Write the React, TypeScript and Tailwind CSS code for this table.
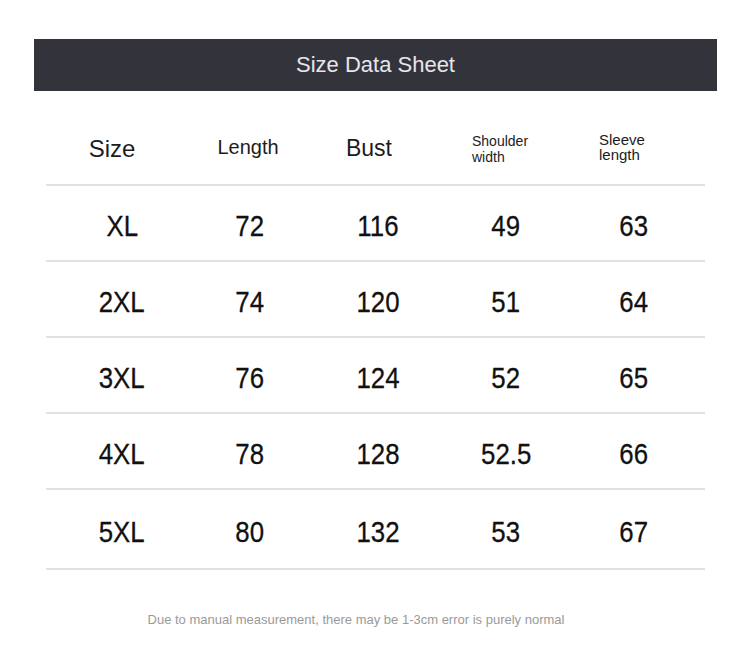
import React from "react";

const rows = [
  ["XL", "72", "116", "49", "63"],
  ["2XL", "74", "120", "51", "64"],
  ["3XL", "76", "124", "52", "65"],
  ["4XL", "78", "128", "52.5", "66"],
  ["5XL", "80", "132", "53", "67"],
];

export default function App() {
  return (
    <div
      className="w-[750px] h-[672px] bg-white overflow-hidden"
      style={{ fontFamily: '"Liberation Sans", Arial, sans-serif' }}
    >
      <div className="pt-[39px] pl-[34px]">
        <div className="w-[683px] h-[52px] bg-[#33333c] flex items-center justify-center">
          <span className="text-[22px] text-[#e6e6ea] leading-none">Size Data Sheet</span>
        </div>
      </div>
      <div className="ml-[46px] w-[659px]">
        <div className="h-[95px] pt-[20px] border-b-2 border-[#e2e2e2] grid grid-cols-[12px_128px_128px_128px_128px_128px] items-center text-[#1c1c1c]">
          <div />
          <div className="text-center text-[24px] pr-[20px] pt-[2px]">Size</div>
          <div className="text-center text-[20px] pr-[4px] -mt-[2px]">Length</div>
          <div className="text-center text-[23px] pr-[18px] pt-[2px]">Bust</div>
          <div className="pl-[30px] text-[14px] leading-[16px] pt-[2px]">
            Shoulder
            <br />
            width
          </div>
          <div className="pl-[29px] text-[15px] leading-[15px] -mt-[2px]">
            Sleeve
            <br />
            length
          </div>
        </div>
        {rows.map((r, i) => (
          <div
            key={r[0]}
            className={`${i === rows.length - 1 ? "h-[80px]" : "h-[76px]"} pt-[5px] border-b-2 border-[#e2e2e2] grid grid-cols-[12px_128px_128px_128px_128px_128px] items-center text-[#111]`}
          >
            <div />
            {r.map((c) => (
              <div key={c} className="text-center text-[30px] leading-none">
                <span className="inline-block scale-x-[0.86] [-webkit-text-stroke:0.3px_#111]">{c}</span>
              </div>
            ))}
          </div>
        ))}
      </div>
      <div className="mt-[43px] w-[712px] text-center text-[13px] text-[#9a9a9a] leading-none">
        Due to manual measurement, there may be 1-3cm error is purely normal
      </div>
    </div>
  );
}
